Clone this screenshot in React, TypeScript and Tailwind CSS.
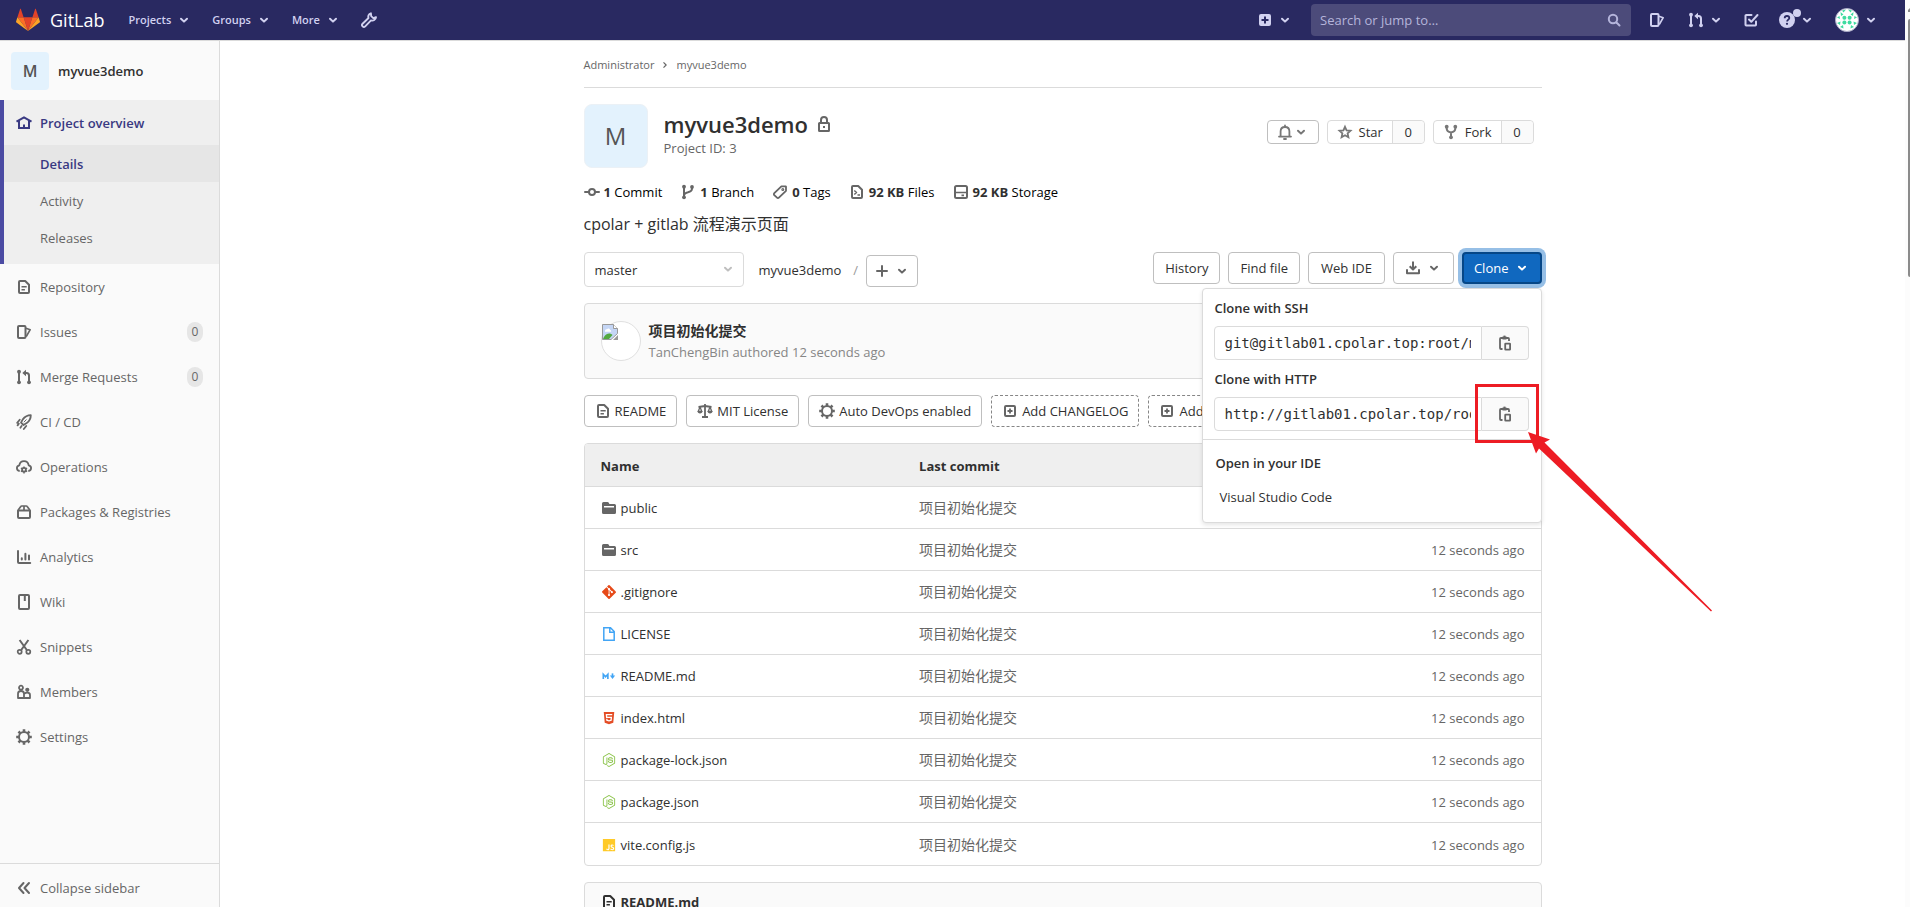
import React, { useState } from 'react';
import { FaGitAlt, FaHtml5, FaJs, FaNodeJs } from 'react-icons/fa';

const stroke = {
  fill: 'none',
  stroke: 'currentColor',
  strokeWidth: 2,
  strokeLinejoin: 'round' as const,
};

const icons: Record<string, React.ReactNode> = {
  chevron: <path {...stroke} strokeLinecap="round" d="M5 6.7 8 9.6l3-2.9" />,
  angleRight: <path {...stroke} strokeWidth={1.6} d="m6 4.5 3.5 3.5L6 11.5" />,
  home: (
    <g {...stroke} strokeLinejoin="miter">
      <path d="M.5 6.6 8 2.4l7.5 4.2" />
      <path d="M3 5.5V13h10V5.5" />
      <path d="M8 9.5V13" />
    </g>
  ),
  doc: (
    <g {...stroke}>
      <path d="M3 3a1 1 0 0 1 1-1h5.2L13 5.8V13a1 1 0 0 1-1 1H4a1 1 0 0 1-1-1z" />
      <path strokeWidth={1.5} d="M5.5 7.8h5.2M5.5 10.8h3.4" />
    </g>
  ),
  issues: (
    <g {...stroke}>
      <rect x="2" y="2" width="7.5" height="12" rx="1" />
      <path strokeWidth={1.7} d="m10 4.2 4.2 1.5-4 7" />
    </g>
  ),
  merge: (
    <g {...stroke}>
      <path d="M3 3v10M9 4h1.5C12 4 13 5 13 6.5V13" />
      <g fill="currentColor" stroke="none">
        <circle cx="3" cy="2.7" r="1.9" />
        <circle cx="3" cy="13.3" r="1.9" />
        <circle cx="13" cy="13.3" r="1.9" />
        <path d="M6.3 4 10 .8v6.4z" />
      </g>
    </g>
  ),
  rocket: (
    <g {...stroke} strokeWidth={1.8}>
      <path d="M14.8 1.2c-3.5 0-6 1.5-8 4.2L5 8.6 7.5 11l3.2-1.9c2.7-2 4.1-4.5 4.1-7.9z" />
      <path strokeLinecap="round" d="M3.7 5.8 1.2 8.9M2.8 9.8l-1.2 1.6M5.6 12l-1.2 1.7M10.2 12l-2.4 3" />
      <path d="m10.5 5.5-2.7 2.7" strokeWidth={1} />
    </g>
  ),
  cloud: (
    <g {...stroke} strokeWidth={1.8}>
      <path d="M3.7 12C2 11.8.9 10.6.9 9.1c0-1.5 1-2.5 2.4-2.8C3.7 4 5.5 2.2 8 2.2s4.3 1.7 4.7 4.1c1.4.3 2.4 1.3 2.4 2.8s-1.1 2.7-2.8 2.9" />
      <circle cx="8" cy="10.8" r="1.9" />
      <path
        strokeWidth={1.4}
        d="M8 7.5v1.6M8 12.7v1.8M4.9 9l1.5.9M9.6 11.7l1.5.9M11.1 9l-1.5.9M6.4 11.7l-1.5.9"
      />
    </g>
  ),
  package: (
    <g {...stroke}>
      <path d="M2 6.5h12V13a1 1 0 0 1-1 1H3a1 1 0 0 1-1-1z" />
      <path strokeWidth={1.7} d="M2.2 6 4.8 2.5C5 2.2 5.3 2 5.7 2h4.6c.4 0 .7.2.9.5L13.8 6M8 2v4.5" />
    </g>
  ),
  chart: (
    <g {...stroke} strokeLinecap="round">
      <path d="M2 2v11a1 1 0 0 0 1 1h11.2" />
      <path d="M5.8 9.2v1.3M9.4 4.7v5.8M13 6.5v4" />
    </g>
  ),
  book: (
    <g {...stroke}>
      <rect x="3" y="1" width="10" height="14" rx="1" />
      <path d="M8.8 1v6" />
    </g>
  ),
  scissors: (
    <g {...stroke} strokeWidth={1.7}>
      <path d="M3.6 1 10.8 11M12.4 1 5.2 11" strokeWidth={2} />
      <circle cx="3.7" cy="12.8" r="2" />
      <circle cx="12.3" cy="12.8" r="2" />
    </g>
  ),
  users: (
    <g {...stroke} strokeWidth={1.8}>
      <circle cx="5" cy="3.7" r="2" />
      <path d="M2 14V9.8C2 8 3.3 7 5 7s3 1 3 2.8V14zM8 14h6v-3c0-1.6-1.1-2.4-2.7-2.4-1.1 0-2 .3-2.8 1" />
      <circle cx="11.3" cy="5.8" r="1.2" fill="currentColor" />
    </g>
  ),
  gear: (
    <g {...stroke}>
      <circle cx="8" cy="8" r="5" />
      <path
        strokeWidth={2.6}
        d="M8 .2v2.6M8 13.2v2.6M.2 8h2.6M13.2 8h2.6M2.5 2.5l1.8 1.8M11.7 11.7l1.8 1.8M13.5 2.5l-1.8 1.8M4.3 11.7l-1.8 1.8"
      />
    </g>
  ),
  collapse: <path {...stroke} strokeLinecap="round" d="M7.5 3 3 8l4.5 5M13 3 8.5 8l4.5 5" />,
  wrench: (
    <path
      {...stroke}
      strokeWidth={1.9}
      d="M9.9 1.3c-2.1.6-3.1 2.7-2.4 4.7l-5.9 5.7a1.8 1.8 0 0 0 2.6 2.6L10 8.4c2.3.8 4.7-.6 5-3.3l-2.7 1-2.1-2z"
    />
  ),
  plusSquare: (
    <path
      fill="currentColor"
      fillRule="evenodd"
      d="M4 2h8a2 2 0 0 1 2 2v8a2 2 0 0 1-2 2H4a2 2 0 0 1-2-2V4a2 2 0 0 1 2-2zm3 2.5V7H4.5v2H7v2.5h2V9h2.5V7H9V4.5z"
    />
  ),
  plusSquareOutline: (
    <g {...stroke}>
      <rect x="3" y="3" width="10" height="10" rx="1" />
      <path strokeWidth={1.8} d="M8 5.5v5M5.5 8h5" />
    </g>
  ),
  plus: <path {...stroke} strokeLinecap="round" d="M8 3v10M3 8h10" />,
  search: (
    <g {...stroke} strokeLinecap="round">
      <circle cx="7" cy="7" r="4.2" />
      <path d="m10.5 10.5 3 3" />
    </g>
  ),
  todo: (
    <g {...stroke} strokeLinecap="round">
      <path d="M8.5 3H3.2a.7.7 0 0 0-.7.7v9.1c0 .4.3.7.7.7h9.1c.4 0 .7-.3.7-.7V9.5" />
      <path d="m6 7.5 2.3 2.3L14.5 3" />
    </g>
  ),
  help: (
    <>
      <circle cx="8" cy="8" r="8" fill="currentColor" />
      <path d="M5.7 6.2C5.7 4.8 6.7 4 8 4s2.3.8 2.3 2c0 1.6-2.2 1.7-2.2 3.5" fill="none" stroke="#292961" strokeWidth={1.8} />
      <circle cx="8" cy="11.8" r="1.1" fill="#292961" />
    </>
  ),
  lock: (
    <g {...stroke}>
      <rect x="3" y="7" width="10" height="8" rx=".5" />
      <path d="M5 7V4a3 3 0 0 1 6 0v3" />
      <path d="M8 10v2" />
    </g>
  ),
  bell: (
    <g {...stroke} strokeWidth={1.8}>
      <path d="M3.6 12.4V7.5C3.6 4.8 5.4 3 8 3s4.4 1.8 4.4 4.5v4.9" />
      <path strokeLinecap="round" d="M2 12.6h12M8 1.5V3M7 15h2" />
    </g>
  ),
  star: (
    <path
      {...stroke}
      strokeWidth={1.8}
      strokeLinejoin="miter"
      d="m8 2.8 1.6 3.6 3.9.4-2.9 2.6.8 3.9L8 11.3l-3.4 2 .8-3.9-2.9-2.6 3.9-.4z"
    />
  ),
  fork: (
    <g {...stroke}>
      <path d="M3.7 3v1.5C3.7 7 5.5 8 8 8.5 10.5 8 12.3 7 12.3 4.5V3M8 8.5V13" />
      <g fill="currentColor" stroke="none">
        <circle cx="3.7" cy="2.7" r="1.9" />
        <circle cx="12.3" cy="2.7" r="1.9" />
        <circle cx="8" cy="13.3" r="1.9" />
      </g>
    </g>
  ),
  commit: (
    <g {...stroke} strokeLinecap="round">
      <circle cx="8" cy="8" r="3" />
      <path d="M1 8h3.5M11.5 8H15" />
    </g>
  ),
  branch: (
    <g {...stroke}>
      <path d="M4 3v10M12 3.5v1C12 7 10.5 7.7 8 8.3 5.5 8.8 4 9.5 4 12" />
      <g fill="currentColor" stroke="none">
        <circle cx="4" cy="2.7" r="1.9" />
        <circle cx="12" cy="2.9" r="1.9" />
        <circle cx="4" cy="13.3" r="1.9" />
      </g>
    </g>
  ),
  tag: (
    <g {...stroke} strokeWidth={1.8}>
      <path d="M14 2.6v4.2L6.9 13.7a1.3 1.3 0 0 1-1.9 0l-2.7-2.6a1.3 1.3 0 0 1 0-1.9L9.4 2.3H13.6z" />
      <circle cx="10.8" cy="5.4" r=".6" />
    </g>
  ),
  code: (
    <g {...stroke}>
      <path d="M3 3a1 1 0 0 1 1-1h5.2L13 5.8V13a1 1 0 0 1-1 1H4a1 1 0 0 1-1-1z" />
      <path strokeWidth={1.5} d="m5.3 6.5 2.2 2-2.2 2M8.5 11h2.5" />
    </g>
  ),
  disk: (
    <g {...stroke}>
      <rect x="2" y="2" width="12" height="12" rx="1.5" />
      <path d="M2 8.5h12M8.5 11.4H11" strokeWidth={1.7} />
    </g>
  ),
  download: (
    <g {...stroke}>
      <path d="M8 1.5V9" />
      <path d="m4.7 6.2 3.3 3.3 3.3-3.3" />
      <path strokeLinecap="round" d="M2 10v3.3h12V10" />
    </g>
  ),
  copy: (
    <g {...stroke} strokeWidth={1.8}>
      <path d="M5.5 14H4a1 1 0 0 1-1-1V4a1 1 0 0 1 1-1h7a1 1 0 0 1 1 1v2" />
      <rect x="8.2" y="8.7" width="4.9" height="6" rx=".4" />
      <path strokeWidth={3} d="M5.5 3h4" />
      <path d="M6.5 1.5h2" />
    </g>
  ),
  scale: (
    <g {...stroke} strokeWidth={1.8}>
      <path d="M8 1v12.5M5 14h6M1.5 4 8 3l6.5 1" />
      <path strokeWidth={1.3} d="M3 4 1.2 8.5h3.6zM13 4l-1.8 4.5h3.6z" />
      <path
        fill="currentColor"
        stroke="none"
        d="M.5 8h5c0 1.5-1 2.5-2.5 2.5S.5 9.5.5 8zM10.5 8h5c0 1.5-1 2.5-2.5 2.5s-2.5-1-2.5-2.5z"
      />
    </g>
  ),
  folder: (
    <path
      fill="currentColor"
      fillRule="evenodd"
      d="M2.5 2h4c.6 0 1 .3 1.3.8l.6 1.2h5.1A1.5 1.5 0 0 1 15 5.5v7a1.5 1.5 0 0 1-1.5 1.5h-11A1.5 1.5 0 0 1 1 12.500v-9A1.500 1.500 0 0 1 2.500 2zM3 6v1.500h10V6z"
    />
  ),
  license: (
    <path fill="none" stroke="currentColor" strokeWidth={1.5} d="M2.8 1.8h6.7l3.7 3.8v8.6H2.8zM8.8 2v4.3h4.4" />
  ),
  markdown: (
    <g fill="none" stroke="currentColor" strokeWidth={1.9}>
      <path d="M1.5 11.5V6l2.6 2.8L6.7 6v5.5" />
      <path d="M12 5v4" />
      <path fill="currentColor" stroke="none" d="M9 7.5h6l-3 4z" />
    </g>
  ),
};

function Icon({ name, className = 'size-4' }: { name: string; className?: string }) {
  return (
    <svg viewBox="0 0 16 16" className={`shrink-0 ${className}`} aria-hidden="true">
      {icons[name]}
    </svg>
  );
}

function Tanuki() {
  return (
    <svg viewBox="0 0 36 36" className="size-6 shrink-0" aria-hidden="true">
      <path fill="#e24329" d="m18 34.4 6.6-20.4H11.4z" />
      <path fill="#fc6d26" d="M18 34.4 11.4 14H2.1z" />
      <path fill="#fca326" d="m2.1 14-2 6.2c-.2.6 0 1.2.5 1.5L18 34.4z" />
      <path fill="#e24329" d="M2.1 14h9.3L7.4 1.7c-.2-.6-1.1-.6-1.3 0z" />
      <path fill="#fc6d26" d="m18 34.4 6.6-20.4h9.3z" />
      <path fill="#fca326" d="m33.9 14 2 6.2c.2.6 0 1.2-.5 1.5L18 34.4z" />
      <path fill="#e24329" d="M33.9 14h-9.3l4-12.3c.2-.6 1.1-.6 1.3 0z" />
    </svg>
  );
}

function Identicon() {
  return (
    <svg viewBox="0 0 24 24" className="size-6 shrink-0" aria-hidden="true">
      <circle cx="12" cy="12" r="11.5" fill="#fff" />
      <g fill="#3fdba0">
        <path d="M7 2.5 11 1.5 8.5 4.5zM17 2.5 13 1.5l2.5 3zM5.5 4l3 2.5L6 8zM18.500 4l-3 2.500L18 8z" />
        <path d="M2 9.5 4.5 8 5 11zM22 9.5 19.5 8 19 11zM2 15l3.5-1.5L5 17zM22 15l-3.5-1.5.5 3.5zM5 19l3-2 .5 3.5zM19 19l-3-2-.5 3.5z" />
        <circle cx="9.4" cy="9.8" r="2" />
        <circle cx="14.6" cy="9.8" r="2" />
        <circle cx="9.4" cy="14.6" r="2" />
        <circle cx="14.6" cy="14.6" r="2" />
      </g>
      <circle cx="12" cy="12" r="11.5" fill="none" stroke="#a9a9c6" />
    </svg>
  );
}

function Navbar() {
  return (
    <header className="flex h-[41px] shrink-0 items-center border-b border-[#dbdbdb] bg-[#292961] pr-[26px] pl-4 text-[#d1d1f0]">
      <a href="#" className="flex items-center gap-[10px] text-white">
        <Tanuki />
        <span className="text-lg leading-6">GitLab</span>
      </a>
      <nav className="ml-6 flex items-center gap-5 text-[11px] leading-4 font-semibold">
        {['Projects', 'Groups', 'More'].map((item) => (
          <button key={item} className="flex items-center gap-[5px]">
            {item}
            <Icon name="chevron" />
          </button>
        ))}
        <button aria-label="Admin area">
          <Icon name="wrench" />
        </button>
      </nav>
      <div className="ml-auto flex items-center">
        <button aria-label="New" className="flex items-center gap-1">
          <Icon name="plusSquare" />
          <Icon name="chevron" />
        </button>
        <div className="relative ml-[18px]">
          <input
            type="text"
            aria-label="Search or jump to"
            placeholder="Search or jump to…"
            className="h-8 w-80 rounded bg-[#4c4b7a] pr-8 pl-[9px] text-[13px] leading-5 placeholder:text-[#b5b5db]"
          />
          <Icon name="search" className="absolute top-2 right-[9px] size-4 text-[#b5b5db]" />
        </div>
        <button aria-label="Issues" className="ml-[18px]">
          <Icon name="issues" />
        </button>
        <button aria-label="Merge requests" className="ml-[23px] flex items-center gap-1">
          <Icon name="merge" />
          <Icon name="chevron" />
        </button>
        <button aria-label="To-Do List" className="ml-[19px]">
          <Icon name="todo" />
        </button>
        <button aria-label="Help" className="relative ml-5 flex items-center gap-1">
          <Icon name="help" />
          <span className="absolute -top-[3px] left-[14px] size-2 rounded-full bg-[#d1d1f0]" />
          <Icon name="chevron" />
        </button>
        <button aria-label="Profile" className="ml-5 flex items-center gap-1">
          <Identicon />
          <Icon name="chevron" />
        </button>
      </div>
    </header>
  );
}

const menu = [
  { icon: 'doc', label: 'Repository' },
  { icon: 'issues', label: 'Issues', count: 0 },
  { icon: 'merge', label: 'Merge Requests', count: 0 },
  { icon: 'rocket', label: 'CI / CD' },
  { icon: 'cloud', label: 'Operations' },
  { icon: 'package', label: 'Packages & Registries' },
  { icon: 'chart', label: 'Analytics' },
  { icon: 'book', label: 'Wiki' },
  { icon: 'scissors', label: 'Snippets' },
  { icon: 'users', label: 'Members' },
  { icon: 'gear', label: 'Settings' },
];

function Sidebar() {
  return (
    <aside className="flex w-[220px] shrink-0 flex-col border-r border-[#dbdbdb] bg-[#fafafa] text-[13px] leading-5 text-[#666]">
      <a href="#" className="flex h-[59px] shrink-0 items-center gap-[9px] px-[11px] font-semibold text-[#303030]">
        <span className="flex size-[38px] items-center justify-center rounded bg-[#e3f2fd] text-base text-[#555]">M</span>
        myvue3demo
      </a>
      <div className="border-l-4 border-[#4b4ba3] bg-[#efefef] pb-2">
        <a href="#" className="flex h-[45px] items-center gap-2 px-3 font-semibold text-[#393982]">
          <Icon name="home" />
          Project overview
        </a>
        <a href="#" className="flex h-[37px] items-center bg-[#e6e6e6] px-9 font-semibold text-[#393982]">
          Details
        </a>
        <a href="#" className="flex h-[37px] items-center px-9">
          Activity
        </a>
        <a href="#" className="flex h-[37px] items-center px-9">
          Releases
        </a>
      </div>
      <nav className="flex min-h-0 flex-1 flex-col">
        {menu.map((item) => (
          <a key={item.label} href="#" className="flex h-[45px] shrink-0 items-center gap-2 px-4">
            <Icon name={item.icon} />
            {item.label}
            {item.count !== undefined && (
              <span className="ml-auto w-4 rounded-full bg-[#e6e6e6] text-center text-xs leading-5">{item.count}</span>
            )}
          </a>
        ))}
      </nav>
      <button className="flex h-11 shrink-0 items-center gap-2 border-t border-[#dbdbdb] px-4 pt-1">
        <Icon name="collapse" />
        Collapse sidebar
      </button>
    </aside>
  );
}

function CountButton({ icon, label }: { icon: string; label: string }) {
  return (
    <div className="flex h-6 items-stretch rounded border border-[#dbdbdb] text-[13px] leading-5 text-[#303030]">
      <button className="flex items-center gap-[6px] px-[9px]">
        <Icon name={icon} className="size-4 text-[#777]" />
        {label}
      </button>
      <span className="flex w-8 items-center justify-center rounded-r border-l border-[#dbdbdb] bg-[#fafafa]">0</span>
    </div>
  );
}

function ProjectHeader() {
  return (
    <section>
      <div className="mt-4 flex">
        <div className="flex size-16 items-center justify-center rounded-lg border border-[#ebf1f6] bg-[#e3f2fd] text-2xl text-[#555]">
          M
        </div>
        <div className="ml-4 pt-2">
          <h1 className="flex items-center gap-2 text-[22px] leading-6 font-semibold text-[#303030]">
            myvue3demo
            <Icon name="lock" className="size-4 text-[#666]" />
          </h1>
          <p className="mt-[2px] text-[13px] leading-5 text-[#666]">Project ID: 3</p>
        </div>
        <div className="mt-4 mr-2 ml-auto flex items-start gap-2">
          <button aria-label="Notifications" className="flex h-6 items-center rounded border border-[#bfbfbf] px-[9px] text-[#777]">
            <Icon name="bell" />
            <Icon name="chevron" />
          </button>
          <CountButton icon="star" label="Star" />
          <CountButton icon="fork" label="Fork" />
        </div>
      </div>
      <ul className="mt-3 flex gap-[18px] text-[13px] leading-6 text-black">
        {[
          ['commit', '1', 'Commit'],
          ['branch', '1', 'Branch'],
          ['tag', '0', 'Tags'],
          ['code', '92 KB', 'Files'],
          ['disk', '92 KB', 'Storage'],
        ].map(([icon, value, label]) => (
          <li key={label} className="flex items-center gap-1">
            <Icon name={icon} className="size-4 text-[#666]" />
            <a href="#">
              <strong className="text-[#303030]">{value}</strong> {label}
            </a>
          </li>
        ))}
      </ul>
      <p className="mt-2 text-base leading-6 text-[#303030]">cpolar + gitlab 流程演示页面</p>
    </section>
  );
}

function CloneField({ id, label, url, highlighted }: { id: string; label: string; url: string; highlighted?: boolean }) {
  return (
    <div className="pr-3 pl-[11px]">
      <label htmlFor={id} className="block px-[1px] pt-[9px] pb-[7px] leading-[21px] font-semibold">
        {label}
      </label>
      <div className="flex h-[34px]">
        <input
          id={id}
          readOnly
          defaultValue={url}
          className="w-0 flex-1 rounded-l border border-[#dbdbdb] px-[10px] font-['DejaVu_Sans_Mono',monospace] text-sm text-[#303030]"
        />
        <div className="relative">
          <button
            aria-label="Copy URL"
            className="flex h-full w-[47px] items-center justify-center rounded-r border border-l-0 border-[#dbdbdb] bg-[#fafafa] text-[#666]"
          >
            <Icon name="copy" />
          </button>
          {highlighted && (
            <>
              <span className="absolute -top-[13px] -left-[7px] h-[59px] w-16 border-[3px] border-[#ed1c24]" />
              <svg viewBox="0 0 184 180" className="absolute top-[35px] left-[46px] h-[180px] w-[184px]" aria-hidden="true">
                <path fill="#ed1c24" d="M0 0 22 7.5 16.5 10.5 184 178.5 183 179.5 11 16.5 8 21.5z" />
              </svg>
            </>
          )}
        </div>
      </div>
    </div>
  );
}

function CloneMenu() {
  return (
    <div className="absolute top-9 right-0 z-10 w-[340px] rounded border border-[#dbdbdb] bg-white pb-[3px] text-[13px] leading-5 text-[#303030] shadow-[0_2px_4px_rgba(0,0,0,0.1)]">
      <CloneField id="ssh" label="Clone with SSH" url="git@gitlab01.cpolar.top:root/myvue3demo.git" />
      <CloneField id="http" label="Clone with HTTP" url="http://gitlab01.cpolar.top/root/myvue3demo.git" highlighted />
      <div className="mt-2 border-t border-[#dbdbdb] px-[13px] pt-[11px]">
        <p className="py-[2px] font-semibold">Open in your IDE</p>
        <a href="#" className="block px-1 py-3">
          Visual Studio Code
        </a>
      </div>
    </div>
  );
}

const toolButton = 'flex h-8 items-center rounded border border-[#bfbfbf]';

function TreeControls() {
  const [open, setOpen] = useState(true);

  return (
    <div className="mt-4 flex text-[13px] leading-5 text-[#303030]">
      <div className="relative">
        <select aria-label="Branch" className="h-[35px] w-40 appearance-none rounded border border-[#dbdbdb] bg-white px-[10px]">
          <option>master</option>
        </select>
        <Icon name="chevron" className="pointer-events-none absolute top-[9px] right-2 size-4 text-[#bfbfbf]" />
      </div>
      <a href="#" className="ml-[15px] self-center">
        myvue3demo
      </a>
      <span className="mr-2 ml-3 self-center text-[#999]">/</span>
      <button aria-label="Add to tree" className="flex h-8 items-center gap-1 self-end rounded border border-[#bfbfbf] px-[7px] text-[#666]">
        <Icon name="plus" />
        <Icon name="chevron" />
      </button>
      <div className="relative ml-auto flex items-start gap-2">
        <a href="#" className={`${toolButton} px-[11px]`}>History</a>
        <a href="#" className={`${toolButton} px-[11px]`}>Find file</a>
        <button className={`${toolButton} px-3`}>Web IDE</button>
        <button aria-label="Download" className={`${toolButton} gap-[5px] px-[11px] text-[#666]`}>
          <Icon name="download" />
          <Icon name="chevron" />
        </button>
        <button
          onClick={() => setOpen(!open)}
          className="flex h-8 items-center gap-[5px] rounded border-2 border-[#064787] bg-[#1068bf] px-[10px] text-white ring-4 ring-[#96bfe6]"
        >
          Clone
          <Icon name="chevron" />
        </button>
        {open && <CloneMenu />}
      </div>
    </div>
  );
}

function CommitBox() {
  return (
    <div className="mt-4 flex h-[76px] items-center rounded border border-[#dbdbdb] bg-[#fafafa] px-4">
      <div className="size-10 rounded-full border border-[#e0e0e0] bg-white">
        <svg viewBox="0 0 16 16" className="mt-[2px] size-4" aria-hidden="true">
          <path fill="#c5d6f5" stroke="#999" d="M.5.5h11l4 4v5L9 15.5H.5z" />
          <path fill="#fff" d="M3 7c0-1.5 1.2-2 2-1.7C5.7 4 8 4.3 8 6c1 0 1.5 1 1 1.7H3z" />
          <path fill="#53a93f" d="M1 15c1-3 3-5.5 6-5.5 1.5 0 2.5.5 3.5 1.5L7 15z" />
          <path fill="#fff" stroke="#999" d="M11.5.5v4h4" />
          <path fill="#999" d="M16 11v5h-5z" />
        </svg>
      </div>
      <div className="ml-2 text-[13px] leading-5">
        <a href="#" className="block text-sm leading-[22px] font-bold text-[#303030]">项目初始化提交</a>
        <p className="text-[#868686]">TanChengBin authored 12 seconds ago</p>
      </div>
    </div>
  );
}

const shortcuts = [
  { icon: 'doc', label: 'README' },
  { icon: 'scale', label: 'MIT License' },
  { icon: 'gear', label: 'Auto DevOps enabled' },
  { icon: 'plusSquareOutline', label: 'Add CHANGELOG', add: true },
  { icon: 'plusSquareOutline', label: 'Add CONTRIBUTING', add: true },
];

function Shortcuts() {
  return (
    <div className="mt-4 flex gap-[9px] text-[13px] leading-5 text-[#303030]">
      {shortcuts.map((item) => (
        <a
          key={item.label}
          href="#"
          className={`flex h-8 items-center gap-1 rounded border px-[10px] ${item.add ? 'border-dashed border-[#868686]' : 'border-[#bfbfbf]'}`}
        >
          <Icon name={item.icon} className="size-4 text-[#666]" />
          {item.label}
        </a>
      ))}
    </div>
  );
}

const files = [
  { name: 'public', icon: <Icon name="folder" className="size-4 text-[#666]" /> },
  { name: 'src', icon: <Icon name="folder" className="size-4 text-[#666]" /> },
  { name: '.gitignore', icon: <FaGitAlt className="size-4 text-[#e64a19]" /> },
  { name: 'LICENSE', icon: <Icon name="license" className="size-4 text-[#42a5f5]" /> },
  { name: 'README.md', icon: <Icon name="markdown" className="size-[14px] text-[#42a5f5]" /> },
  { name: 'index.html', icon: <FaHtml5 className="size-[14px] text-[#e44d26]" /> },
  { name: 'package-lock.json', icon: <FaNodeJs className="size-[14px] text-[#8bc34a]" /> },
  { name: 'package.json', icon: <FaNodeJs className="size-[14px] text-[#8bc34a]" /> },
  { name: 'vite.config.js', icon: <FaJs className="size-[14px] text-[#ffca28]" /> },
];

function FileTable() {
  return (
    <div className="mt-4 overflow-hidden rounded border border-[#dbdbdb]">
      <table className="w-full table-fixed text-[13px] leading-5 text-[#303030]">
        <thead>
          <tr className="h-[42px] border-b border-[#dbdbdb] bg-[#efefef] text-left">
            <th className="w-[35%] px-4 pt-[2px] font-bold">Name</th>
            <th className="px-0 pt-[2px] font-bold">Last commit</th>
            <th className="w-[20%] px-4 pt-[2px] text-right font-bold">Last update</th>
          </tr>
        </thead>
        <tbody>
          {files.map((file) => (
            <tr key={file.name} className="h-[42px] border-b border-[#dbdbdb] last:h-[43px] last:border-b-0">
              <td className="px-4 pt-[2px]">
                <a href="#" className="flex items-center gap-1">
                  <span className="flex size-4 items-center justify-center">{file.icon}</span>
                  {file.name}
                </a>
              </td>
              <td className="px-0 pt-[2px] text-sm leading-5 text-[#666]">项目初始化提交</td>
              <td className="px-4 pt-[2px] text-right text-[#666]">12 seconds ago</td>
            </tr>
          ))}
        </tbody>
      </table>
    </div>
  );
}

export default function App() {
  return (
    <div className="flex h-screen overflow-hidden bg-white font-['Open_Sans','Noto_Sans_CJK_SC',sans-serif]">
      <div className="flex min-w-0 flex-1 flex-col">
        <Navbar />
        <div className="flex min-h-0 flex-1">
          <Sidebar />
          <main className="min-w-0 flex-1 overflow-hidden">
            <div className="mx-auto max-w-[990px] px-4">
              <nav className="flex h-[47px] items-center gap-[5px] border-b border-[#dbdbdb] pt-[2px] text-[11px] leading-4 text-[#666]">
                <a href="#">Administrator</a>
                <Icon name="angleRight" className="size-3" />
                <a href="#">myvue3demo</a>
              </nav>
              <ProjectHeader />
              <TreeControls />
              <CommitBox />
              <Shortcuts />
              <FileTable />
              <div className="mt-4 flex items-center gap-1 rounded-t border border-[#dbdbdb] bg-[#fafafa] px-4 py-[9px] text-[13px] leading-5 font-bold text-[#303030]">
                <Icon name="doc" />
                README.md
              </div>
            </div>
          </main>
        </div>
      </div>
      <div className="flex w-[5px] shrink-0 flex-col items-end bg-[#fcfcfc] pt-2">
        <svg viewBox="0 0 2 4" className="h-1 w-[2px]" aria-hidden="true">
          <path fill="#8b8b8b" d="M2 0v4H0V2z" />
        </svg>
        <div className="mt-[7px] h-[258px] w-[2px] rounded-l bg-[#8b8b8b]" />
      </div>
    </div>
  );
}
